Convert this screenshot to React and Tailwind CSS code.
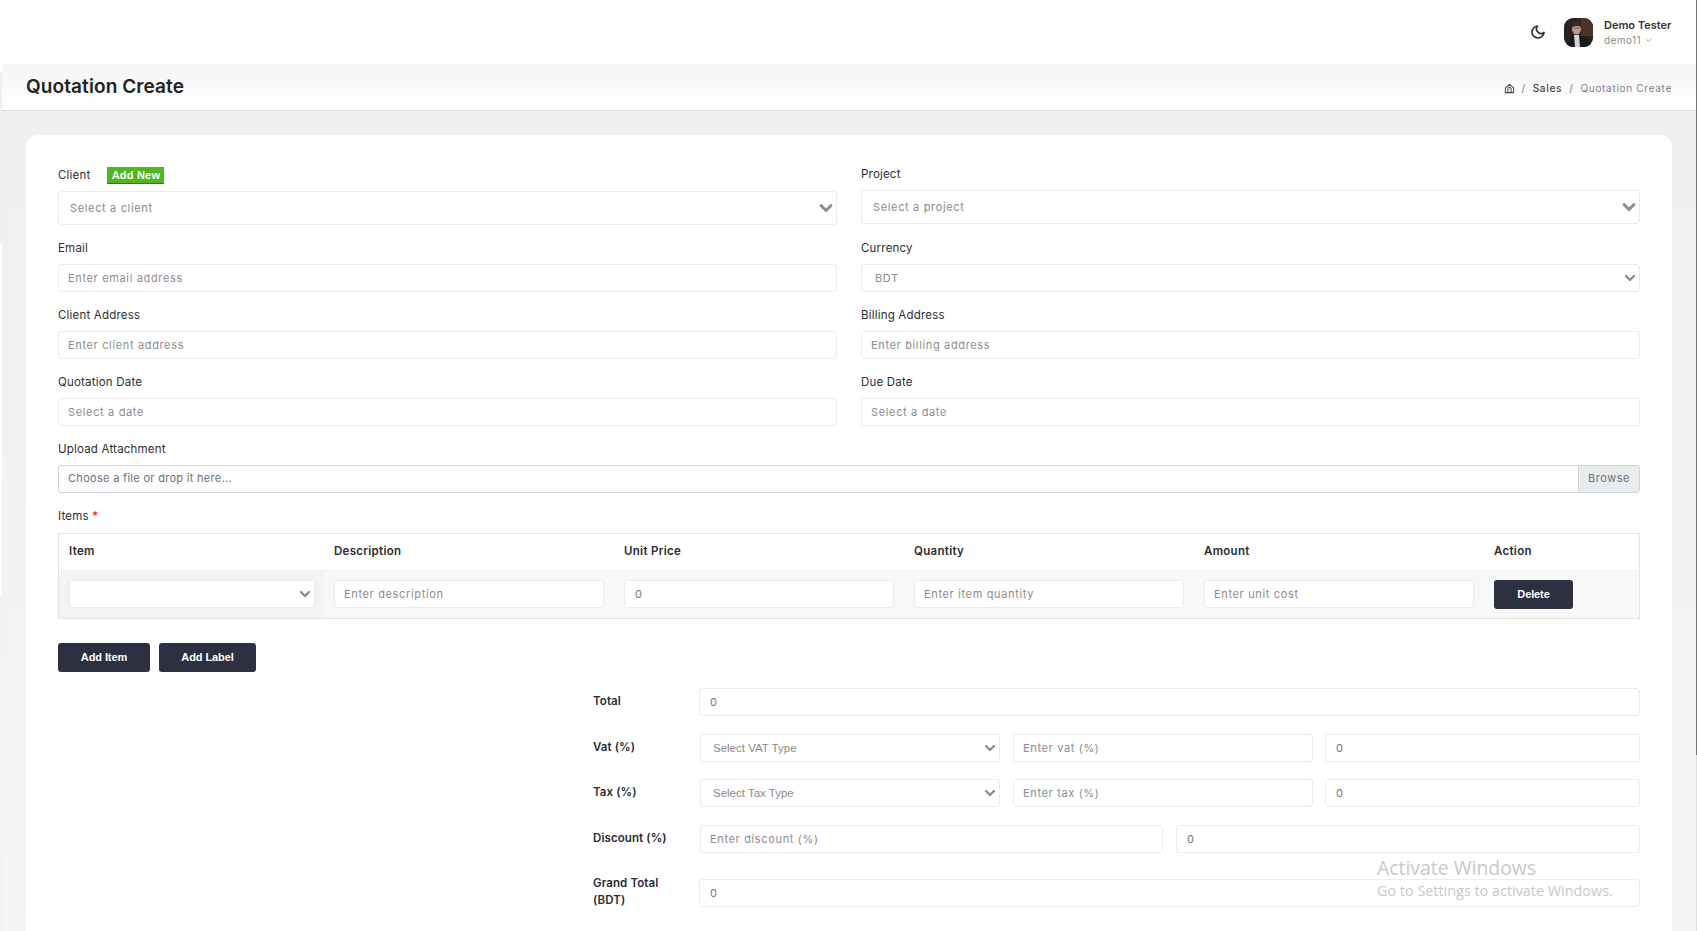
import React from 'react';
import { ChevronDown } from 'lucide-react';

const fieldClass = 'h-[28px] w-full rounded-[3px] border border-[#ebebeb] bg-white px-[9px] text-[11px] tracking-[0.65px] text-[#333] placeholder:text-[#8d8d8d] outline-none';

const Field = ({ label, placeholder, value, className = '' }) => (
  <div className={className}>
    {label && <label className="mb-[8px] block h-[16px] text-[11.5px] leading-[16px] tracking-[0.2px] text-[#2e2e33]">{label}</label>}
    <input className={fieldClass} placeholder={placeholder} defaultValue={value} />
  </div>
);

const ValueBox = ({ value, className = '' }) => (
  <div className={`flex h-[28px] items-center rounded-[3px] border border-[#ebebeb] bg-white px-[10px] text-[11px] text-[#777] ${className}`}>{value}</div>
);

const SelectBox = ({ text, className = '', size = 16, arial = false }) => (
  <div className={`flex items-center justify-between rounded-[3px] border border-[#ebebeb] bg-white text-[#8a8a8a] ${arial ? "font-['Liberation_Sans'] text-[11.5px]" : 'text-[11px] tracking-[0.65px]'} ${className}`}>
    <span className="mt-[1px]">{text}</span>
    <ChevronDown size={size} strokeWidth={3.5} className="text-[#8c8c8c]" />
  </div>
);

const Th = ({ children, className = '' }) => (
  <div className={`pl-[10px] text-[11.5px] font-semibold tracking-[0.3px] text-[#2b2b33] ${className}`}>{children}</div>
);

const DarkButton = ({ children, className = '' }) => (
  <button className={`rounded-[3px] bg-[#2c3040] font-['Liberation_Sans'] text-[11px] font-bold tracking-[-0.1px] text-white ${className}`}>{children}</button>
);

const RowLabel = ({ children, className = 'w-[106px]' }) => (
  <div className={`shrink-0 pb-[2px] text-[11.5px] font-semibold leading-[17px] tracking-[0.1px] text-[#2b2b33] ${className}`}>{children}</div>
);

const App = () => {
  return (
    <div className="relative flex h-[931px] overflow-hidden bg-white font-['Inter','Liberation_Sans',sans-serif]">
      {/* left edge of the collapsed sidebar */}
      <div className="flex w-[2px] shrink-0 flex-col">
        <div className="h-[72px] bg-white" />
        <div className="h-[171px] bg-[#f0f0f0]" />
        <div className="h-[352px] bg-white" />
        <div className="flex-1 bg-[#f2f2f2]" />
      </div>

      <div className="flex h-[931px] min-w-0 flex-1 flex-col">
        {/* top bar */}
        <div className="flex h-[64px] shrink-0 items-center justify-end bg-white pr-[25px]">
          <svg width="16" height="16" viewBox="0 0 24 24" fill="none" stroke="#333" strokeWidth="2.6" strokeLinecap="round" strokeLinejoin="round">
            <path d="M21 12.8A9 9 0 1 1 11.2 3a7 7 0 0 0 9.8 9.8z" />
          </svg>
          <svg width="29" height="29" viewBox="0 0 29 29" className="ml-[18px] rounded-[9px]">
            <rect width="29" height="29" fill="#2e221c" />
            <rect x="17" y="0" width="12" height="18" fill="#4b3326" />
            <path d="M4 29c0-8 3-11 8-12l11 3c3 2 4 5 4 9z" fill="#171b26" />
            <path d="M10 17h5l1 12h-5z" fill="#d8d4cc" />
            <ellipse cx="12.500" cy="11" rx="4.500" ry="5.500" fill="#b89a88" />
            <path d="M8 9c0-4 2-5.500 5-5.500s4.500 2 4 5.500c-2-1.500-5-1.500-9 0z" fill="#3a2c24" />
            <path d="M9 10h7" stroke="#6d6a68" strokeWidth="1" />
          </svg>
          <div className="ml-[11px] w-[68px] whitespace-nowrap pt-[1px]">
            <div className="text-[11px] font-semibold leading-[14px] text-[#333]">Demo Tester</div>
            <div className="mt-[1px] flex items-center text-[10px] leading-[14px] tracking-[0.4px] text-[#8b8b8b]">
              demo11
              <ChevronDown size={9} className="ml-[3px]" />
            </div>
          </div>
        </div>

        {/* page title */}
        <div className="flex h-[47px] shrink-0 items-center justify-between border-b border-[#d9d9e0] bg-gradient-to-b from-[#f5f5f5] to-white pl-[24px] pr-[25px]">
          <h1 className="text-[19px] font-semibold tracking-[0.1px] text-[#222]">Quotation Create</h1>
          <div className="flex items-center pt-[2px] text-[10px] tracking-[0.7px]">
            <svg width="11" height="11" viewBox="0 0 24 24" fill="none" stroke="#444" strokeWidth="2.2" strokeLinejoin="round">
              <path d="M3 10.500 12 3l9 7.500V21H3z" />
              <path d="M8.500 21v-8a3.500 3.500 0 0 1 7 0v8" />
            </svg>
            <span className="ml-[6px] mr-[7px] text-[#777]">/</span>
            <span className="font-medium text-[#444]">Sales</span>
            <span className="mx-[7px] text-[#777]">/</span>
            <span className="text-[#7c8190]">Quotation Create</span>
          </div>
        </div>

        {/* body */}
        <div className="flex-1 bg-gradient-to-b from-[#f0f0f0] to-[#f5f5f5] pl-[24px] pr-[25px] pt-[24px]">
          <div className="h-[800px] rounded-t-[12px] bg-white pl-[32px] pr-[32px] pt-[32px]">
            <div className="grid grid-cols-2 gap-x-[24px]">
              <div>
                <div className="mb-[7px] flex h-[17px] items-center text-[11.5px] tracking-[0.2px] text-[#2e2e33]">
                  Client
                  <span className="ml-[17px] flex h-[17px] w-[57px] items-center justify-center border-b border-[#2f7d12] bg-[#4cb71f] font-['Liberation_Sans'] text-[11px] font-bold text-white">Add New</span>
                </div>
                <SelectBox text="Select a client" className="h-[34px] pl-[11px]" size={20} />
              </div>
              <div>
                <div className="mb-[7px] flex h-[16px] items-center text-[11.5px] tracking-[0.2px] text-[#2e2e33]">Project</div>
                <SelectBox text="Select a project" className="h-[34px] pl-[11px]" size={20} />
              </div>
            </div>

            <div className="mt-[15px] grid grid-cols-2 gap-x-[24px] gap-y-[15px]">
              <Field label="Email" placeholder="Enter email address" />
              <div>
                <label className="mb-[8px] block h-[16px] text-[11.5px] leading-[16px] tracking-[0.2px] text-[#2e2e33]">Currency</label>
                <SelectBox text="BDT" className="h-[28px] pl-[13px] pr-[1px]" />
              </div>
              <Field label="Client Address" placeholder="Enter client address" />
              <Field label="Billing Address" placeholder="Enter billing address" />
              <Field label="Quotation Date" placeholder="Select a date" />
              <Field label="Due Date" placeholder="Select a date" />
            </div>

            {/* upload */}
            <div className="mt-[15px]">
              <div className="mb-[8px] h-[16px] text-[11.5px] leading-[16px] tracking-[0.2px] text-[#2e2e33]">Upload Attachment</div>
              <div className="flex h-[28px] items-center overflow-hidden rounded-[3px] border border-[#ced4da] text-[11px] tracking-[0.3px] text-[#6b7079]">
                <span className="flex-1 pb-[1px] pl-[9px]">Choose a file or drop it here...</span>
                <span className="flex h-full w-[61px] items-center justify-center border-l border-[#ced4da] bg-[#e9ecef] pb-[1px] tracking-[0.5px]">Browse</span>
              </div>
            </div>

            {/* items */}
            <div className="mb-[9px] mt-[15px] h-[16px] text-[11.5px] leading-[16px] tracking-[0.2px] text-[#2e2e33]">
              Items <span className="text-[#f00]">*</span>
            </div>
            <div className="border border-[#e3e3e3]">
              <div className="grid h-[37px] grid-cols-[265px_290px_290px_290px_290px_1fr] items-center border-b border-[#edf1f6]">
                <Th>Item</Th>
                <Th>Description</Th>
                <Th>Unit Price</Th>
                <Th>Quantity</Th>
                <Th>Amount</Th>
                <Th>Action</Th>
              </div>
              <div className="grid h-[47px] grid-cols-[265px_290px_290px_290px_290px_1fr] bg-[#f8f8f8]">
                <div className="flex items-center bg-[#f3f3f3] pb-[1px] pl-[10px] pr-[9px]">
                  <SelectBox className="h-[28px] w-full pr-[1px]" />
                </div>
                <div className="flex items-center pb-[1px] pl-[10px] pr-[10px]"><input className={fieldClass} placeholder="Enter description" /></div>
                <div className="flex items-center pb-[1px] pl-[10px] pr-[10px]"><ValueBox value="0" className="w-full" /></div>
                <div className="flex items-center pb-[1px] pl-[10px] pr-[10px]"><input className={fieldClass} placeholder="Enter item quantity" /></div>
                <div className="flex items-center pb-[1px] pl-[10px] pr-[10px]"><input className={fieldClass} placeholder="Enter unit cost" /></div>
                <div className="flex items-center pl-[10px]"><DarkButton className="h-[29px] w-[79px]">Delete</DarkButton></div>
              </div>
            </div>

            <div className="mt-[24px] flex gap-[9px]">
              <DarkButton className="h-[29px] w-[92px]">Add Item</DarkButton>
              <DarkButton className="h-[29px] w-[97px]">Add Label</DarkButton>
            </div>

            {/* totals */}
            <div className="ml-[535px] mt-[16px] flex flex-col">
              <div className="flex h-[28px] items-center">
                <RowLabel>Total</RowLabel>
                <ValueBox value="0" className="flex-1" />
              </div>
              <div className="mt-[18px] flex h-[28px] items-center">
                <RowLabel className="w-[107px]">Vat (%)</RowLabel>
                <SelectBox text="Select VAT Type" arial className="h-[28px] w-[300px] pl-[12px] pr-[1px]" />
                <input className={`${fieldClass} ml-[13px] !w-[300px]`} placeholder="Enter vat (%)" />
                <ValueBox value="0" className="ml-[12px] flex-1" />
              </div>
              <div className="mt-[17px] flex h-[28px] items-center">
                <RowLabel className="w-[107px]">Tax (%)</RowLabel>
                <SelectBox text="Select Tax Type" arial className="h-[28px] w-[300px] pl-[12px] pr-[1px]" />
                <input className={`${fieldClass} ml-[13px] !w-[300px]`} placeholder="Enter tax (%)" />
                <ValueBox value="0" className="ml-[12px] flex-1" />
              </div>
              <div className="mt-[18px] flex h-[28px] items-center">
                <RowLabel className="w-[107px]">Discount (%)</RowLabel>
                <input className={`${fieldClass} !w-[463px]`} placeholder="Enter discount (%)" />
                <ValueBox value="0" className="ml-[13px] flex-1" />
              </div>
              <div className="mt-[26px] flex h-[28px] items-center">
                <RowLabel>Grand Total<br />(BDT)</RowLabel>
                <ValueBox value="0" className="flex-1" />
              </div>
            </div>
          </div>
        </div>
      </div>

      {/* watermark */}
      <div className="pointer-events-none absolute left-[1377px] top-[855px] font-['Open_Sans',sans-serif] text-[#c8c8c8]">
        <div className="text-[19.400px] leading-[26px]">Activate Windows</div>
        <div className="text-[14.400px] leading-[20px]">Go to Settings to activate Windows.</div>
      </div>
      {/* scrollbar */}
      <div className="absolute right-0 top-0 h-[931px] w-[1px] bg-[#dcdcdc]" />
      <div className="absolute right-0 top-0 h-[755px] w-[1px] bg-[#777]" />
    </div>
  );
};

export default App;
